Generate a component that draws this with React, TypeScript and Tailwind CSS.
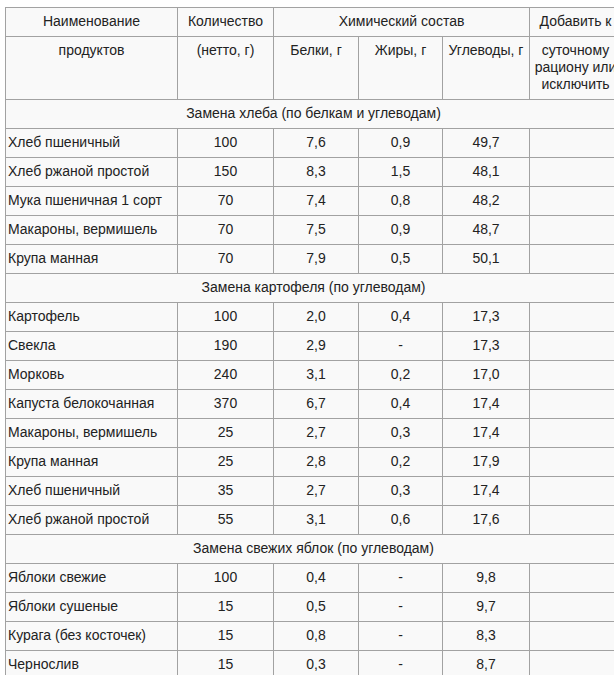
import React from "react";

type Row = [string, string, string, string, string];

const SECTIONS: { title: string; rows: Row[] }[] = [
  {
    title: "Замена хлеба (по белкам и углеводам)",
    rows: [
      ["Хлеб пшеничный", "100", "7,6", "0,9", "49,7"],
      ["Хлеб ржаной простой", "150", "8,3", "1,5", "48,1"],
      ["Мука пшеничная 1 сорт", "70", "7,4", "0,8", "48,2"],
      ["Макароны, вермишель", "70", "7,5", "0,9", "48,7"],
      ["Крупа манная", "70", "7,9", "0,5", "50,1"],
    ],
  },
  {
    title: "Замена картофеля (по углеводам)",
    rows: [
      ["Картофель", "100", "2,0", "0,4", "17,3"],
      ["Свекла", "190", "2,9", "-", "17,3"],
      ["Морковь", "240", "3,1", "0,2", "17,0"],
      ["Капуста белокочанная", "370", "6,7", "0,4", "17,4"],
      ["Макароны, вермишель", "25", "2,7", "0,3", "17,4"],
      ["Крупа манная", "25", "2,8", "0,2", "17,9"],
      ["Хлеб пшеничный", "35", "2,7", "0,3", "17,4"],
      ["Хлеб ржаной простой", "55", "3,1", "0,6", "17,6"],
    ],
  },
  {
    title: "Замена свежих яблок (по углеводам)",
    rows: [
      ["Яблоки свежие", "100", "0,4", "-", "9,8"],
      ["Яблоки сушеные", "15", "0,5", "-", "9,7"],
      ["Курага (без косточек)", "15", "0,8", "-", "8,3"],
      ["Чернослив", "15", "0,3", "-", "8,7"],
    ],
  },
];

const cell = "border border-[#a2a2a2] pt-[5px] pb-[6px] px-[2px] leading-[17px]";

export default function App() {
  return (
    <div className="min-h-screen bg-white pt-[7px] pl-[5px] overflow-hidden font-['Liberation_Sans',Arial,sans-serif] text-[14px] text-[#222]">
      <table className="table-fixed border-collapse w-[616px] bg-[#f9f9f9]">
        <colgroup>
          <col className="w-[172px]" />
          <col className="w-[96px]" />
          <col className="w-[85px]" />
          <col className="w-[84px]" />
          <col className="w-[87px]" />
          <col className="w-[92px]" />
        </colgroup>
        <thead>
          <tr>
            <th className={`${cell} font-normal text-center`}>Наименование</th>
            <th className={`${cell} font-normal text-center`}>Количество</th>
            <th colSpan={3} className={`${cell} font-normal text-center`}>
              Химический состав
            </th>
            <th className={`${cell} font-normal text-center`}>Добавить к</th>
          </tr>
          <tr>
            <th className={`${cell} font-normal text-center align-top`}>продуктов</th>
            <th className={`${cell} font-normal text-center align-top`}>(нетто, г)</th>
            <th className={`${cell} font-normal text-center align-top`}>Белки, г</th>
            <th className={`${cell} font-normal text-center align-top`}>Жиры, г</th>
            <th className={`${cell} font-normal text-center align-top`}>Углеводы, г</th>
            <th className={`${cell} font-normal text-center align-top`}>
              суточному рациону или исключить
            </th>
          </tr>
        </thead>
        <tbody>
          {SECTIONS.map((s) => (
            <React.Fragment key={s.title}>
              <tr>
                <td colSpan={6} className={`${cell} text-center`}>
                  {s.title}
                </td>
              </tr>
              {s.rows.map((r, i) => (
                <tr key={i}>
                  <td className={`${cell} text-left whitespace-nowrap`}>{r[0]}</td>
                  <td className={`${cell} text-center`}>{r[1]}</td>
                  <td className={`${cell} text-center`}>{r[2]}</td>
                  <td className={`${cell} text-center`}>{r[3]}</td>
                  <td className={`${cell} text-center`}>{r[4]}</td>
                  <td className={cell}></td>
                </tr>
              ))}
            </React.Fragment>
          ))}
        </tbody>
      </table>
    </div>
  );
}
